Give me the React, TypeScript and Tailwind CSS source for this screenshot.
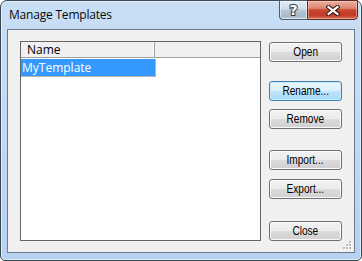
import React from "react";

const btnBase =
  "w-[73px] h-[20px] rounded-[3px] border text-[12px] leading-[18px] text-black text-center select-none";
const btnNormal =
  "border-[#707070] bg-[linear-gradient(to_bottom,#f2f2f2_0%,#ebebeb_50%,#dddddd_50%,#cfcfcf_100%)] shadow-[inset_0_0_0_1px_#fbfbfb]";
const btnFocus =
  "border-[#3c7fb1] bg-[linear-gradient(to_bottom,#eaf6fd_0%,#d9f0fc_50%,#bee6fd_50%,#a7d9f5_100%)] shadow-[inset_0_0_0_1px_#cdeafa]";

function Btn({ label, focus, className }: { label: string; focus?: boolean; className?: string }) {
  return (
    <div
      className={`${btnBase} ${focus ? btnFocus : btnNormal} ${className ?? ""}`}
      style={{ fontFamily: '"Liberation Sans", Arial, sans-serif' }}
    >
      <span className="inline-block scale-x-[0.84]">{label}</span>
    </div>
  );
}

export default function App() {
  return (
    <div className="w-[362px] h-[261px] bg-white">
      <div className="relative w-[362px] h-[261px] rounded-t-[7px] rounded-b-[5px] border border-[#3a4654] bg-[linear-gradient(to_bottom,#c8def5_0%,#bfd8f2_60%,#b6d2ef_100%)] shadow-[inset_0_0_0_1px_rgba(255,255,255,0.55)] flex flex-col px-[6px] pb-[7px]">
        {/* Title bar */}
        <div
          className="h-[28px] flex items-center pl-[2px] pb-[1px] text-[12px] text-[#0b0b0b] tracking-[-0.2px]"
          style={{ fontFamily: '"Open Sans", "Noto Sans", sans-serif' }}
        >
          Manage Templates
        </div>

        {/* Caption buttons */}
        <div className="absolute top-[-1px] right-[3px] flex h-[20px]">
          <div className="w-[28px] h-[20px] rounded-bl-[4px] border border-[#4d5b6c] border-r-0 bg-[linear-gradient(to_bottom,#e3eaf2_0%,#d2dde9_45%,#b7c6d8_50%,#a8b9ce_85%,#c0cedd_100%)] shadow-[inset_0_0_0_1px_rgba(255,255,255,0.5)] flex items-center justify-center">
            <span
              className="text-[14px] font-bold leading-none text-white [-webkit-text-stroke:2px_#33414f] [paint-order:stroke_fill] mt-[-1px]"
              style={{ fontFamily: '"DejaVu Sans", sans-serif' }}
            >
              ?
            </span>
          </div>
          <div className="w-[51px] h-[20px] rounded-br-[4px] border border-[#5a2a22] bg-[linear-gradient(to_bottom,#eab0a3_0%,#de8674_40%,#c9452f_50%,#c13c26_80%,#d9735c_100%)] shadow-[inset_0_0_0_1px_rgba(255,220,210,0.45)] flex items-center justify-center">
            <svg width="14" height="11" viewBox="0 0 14 11">
              <path d="M2.5 2 L11.5 9 M11.5 2 L2.5 9" stroke="#3b1a14" strokeWidth="4.2" strokeLinecap="square" fill="none" />
              <path d="M2.5 2 L11.5 9 M11.5 2 L2.5 9" stroke="#ffffff" strokeWidth="2.2" strokeLinecap="square" fill="none" />
            </svg>
          </div>
        </div>

        {/* Client area */}
        <div className="relative h-[224px] border border-[#6b7b8c] bg-[#f0f0f0] flex items-start pl-[12px] pt-[11px]">
          {/* List view */}
          <div className="w-[241px] h-[200px] border border-[#646464] bg-white flex flex-col">
            <div className="h-[16px] flex border-b border-[#a0a0a0] bg-[#f0f0f0]">
              <div
                className="w-[134px] h-[15px] border-r border-[#a0a0a0] pl-[6px] text-[12px] leading-[15px] text-black shadow-[inset_-1px_0_0_#ffffff]"
                style={{ fontFamily: '"Open Sans", "Noto Sans", sans-serif' }}
              >
                Name
              </div>
              <div className="flex-1" />
            </div>
            <div className="mt-[1px] w-[135px] h-[18px] bg-[#3399ff] border-r border-b border-[#b4b4b4]">
              <div
                className="pl-[1px] text-[12px] leading-[17px] text-white"
                style={{ fontFamily: '"Open Sans", "Noto Sans", sans-serif' }}
              >
                MyTemplate
              </div>
            </div>
          </div>

          {/* Buttons */}
          <div className="ml-[8px] mt-[1px] flex flex-col">
            <Btn label="Open" />
            <Btn label="Rename..." focus className="mt-[19px]" />
            <Btn label="Remove" className="mt-[8px]" />
            <Btn label="Import..." className="mt-[21px]" />
            <Btn label="Export..." className="mt-[9px]" />
            <Btn label="Close" className="mt-[22px]" />
          </div>

          {/* Size grip */}
          <svg className="absolute right-[2px] bottom-[2px]" width="10" height="10" viewBox="0 0 10 10">
            {[
              [7, 1],
              [4, 4],
              [7, 4],
              [1, 7],
              [4, 7],
              [7, 7],
            ].map(([x, y], i) => (
              <g key={i}>
                <rect x={x + 1} y={y + 1} width="2" height="2" fill="#ffffff" />
                <rect x={x} y={y} width="2" height="2" fill="#b8b8b8" />
              </g>
            ))}
          </svg>
        </div>
      </div>
    </div>
  );
}
